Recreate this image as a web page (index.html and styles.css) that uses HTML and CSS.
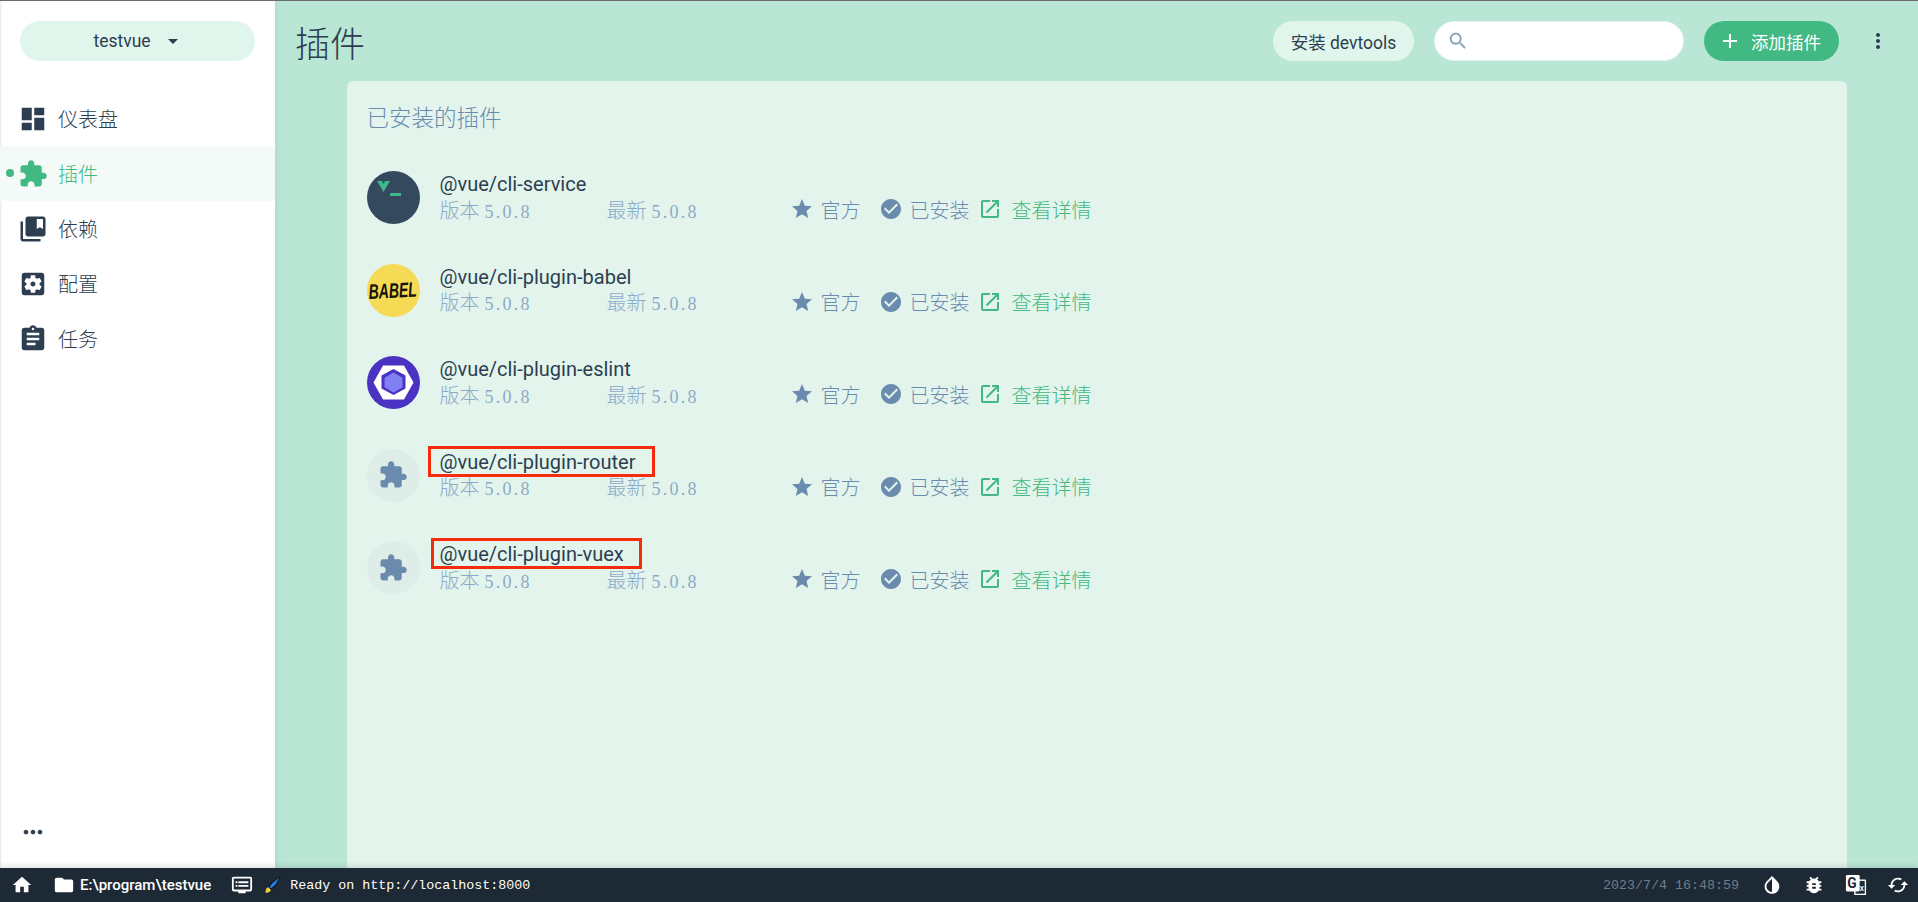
FILE: index.html
```html
<!DOCTYPE html>
<html lang="en">
<head>
  <meta charset="UTF-8">
  <title>vue project manager</title>
  <link rel="stylesheet" href="styles.css">
</head>
<body>
  <svg class="sprites" width="0" height="0">
    <symbol id="i-dashboard" viewBox="0 0 24 24"><path d="M3 13h8V3H3v10zm0 8h8v-6H3v6zm10 0h8V11h-8v10zm0-18v6h8V3h-8z"/></symbol>
    <symbol id="i-extension" viewBox="0 0 24 24"><path d="M20.5 11H19V7c0-1.1-.9-2-2-2h-4V3.5C13 2.12 11.88 1 10.5 1S8 2.12 8 3.5V5H4c-1.1 0-1.99.9-1.99 2v3.8H3.5c1.49 0 2.7 1.21 2.7 2.7s-1.21 2.7-2.7 2.7H2V20c0 1.1.9 2 2 2h3.8v-1.5c0-1.49 1.21-2.7 2.7-2.7 1.49 0 2.7 1.21 2.7 2.7V22H17c1.1 0 2-.9 2-2v-4h1.5c1.38 0 2.5-1.12 2.5-2.5S21.88 11 20.5 11z"/></symbol>
    <symbol id="i-collections" viewBox="0 0 24 24"><path d="M4 6H2v14c0 1.1.9 2 2 2h14v-2H4V6zm16-4H8c-1.1 0-2 .9-2 2v12c0 1.1.9 2 2 2h12c1.1 0 2-.9 2-2V4c0-1.1-.9-2-2-2zm0 10l-2.5-1.5L15 12V4h5v8z"/></symbol>
    <symbol id="i-settings" viewBox="0 0 24 24"><path d="M12 10c-1.1 0-2 .9-2 2s.9 2 2 2 2-.9 2-2-.9-2-2-2zm7-7H5c-1.11 0-2 .9-2 2v14c0 1.1.89 2 2 2h14c1.11 0 2-.9 2-2V5c0-1.1-.89-2-2-2zm-1.75 9c0 .23-.02.46-.05.68l1.48 1.16c.13.11.17.3.08.45l-1.4 2.42c-.09.15-.27.21-.43.15l-1.74-.7c-.36.28-.76.51-1.18.69l-.26 1.85c-.03.17-.18.3-.35.3h-2.8c-.17 0-.32-.13-.35-.29l-.26-1.85c-.43-.18-.82-.41-1.18-.69l-1.74.7c-.16.06-.34 0-.43-.15l-1.4-2.42c-.09-.15-.05-.34.08-.45l1.48-1.16c-.03-.23-.05-.46-.05-.69 0-.23.02-.46.05-.68l-1.48-1.16c-.13-.11-.17-.3-.08-.45l1.4-2.42c.09-.15.27-.21.43-.15l1.74.7c.36-.28.76-.51 1.18-.69l.26-1.85c.03-.17.18-.3.35-.3h2.8c.17 0 .32.13.35.29l.26 1.85c.43.18.82.41 1.18.69l1.74-.7c.16-.06.34 0 .43.15l1.4 2.42c.09.15.05.34-.08.45l-1.48 1.16c.03.23.05.46.05.69z"/></symbol>
    <symbol id="i-assignment" viewBox="0 0 24 24"><path d="M19 3h-4.18C14.4 1.84 13.3 1 12 1c-1.3 0-2.4.84-2.82 2H5c-1.1 0-2 .9-2 2v14c0 1.1.9 2 2 2h14c1.1 0 2-.9 2-2V5c0-1.1-.9-2-2-2zm-7 0c.55 0 1 .45 1 1s-.45 1-1 1-1-.45-1-1 .45-1 1-1zm2 14H7v-2h7v2zm3-4H7v-2h10v2zm0-4H7V7h10v2z"/></symbol>
    <symbol id="i-star" viewBox="0 0 24 24"><path d="M12 17.27L18.18 21l-1.64-7.03L22 9.24l-7.19-.61L12 2 9.19 8.63 2 9.24l5.46 4.73L5.82 21z"/></symbol>
    <symbol id="i-check" viewBox="0 0 24 24"><path d="M12 2C6.48 2 2 6.48 2 12s4.48 10 10 10 10-4.48 10-10S17.52 2 12 2zm-2 15l-5-5 1.41-1.41L10 14.17l7.59-7.59L19 8l-9 9z"/></symbol>
    <symbol id="i-open" viewBox="0 0 24 24"><path d="M19 19H5V5h7V3H5c-1.11 0-2 .9-2 2v14c0 1.1.89 2 2 2h14c1.1 0 2-.9 2-2v-7h-2v7zM14 3v2h3.59l-9.83 9.83 1.41 1.41L19 6.41V10h2V3h-7z"/></symbol>
  </svg>

  <div class="app">
    <div class="body-row">
      <aside class="sidebar">
        <div class="project-pill">
          <span>testvue</span>
          <i class="caret"></i>
        </div>
        <nav class="nav">
          <a class="nav-item"><svg class="nav-icon"><use href="#i-dashboard"/></svg>仪表盘</a>
          <a class="nav-item active"><svg class="nav-icon"><use href="#i-extension"/></svg>插件</a>
          <a class="nav-item"><svg class="nav-icon"><use href="#i-collections"/></svg>依赖</a>
          <a class="nav-item"><svg class="nav-icon"><use href="#i-settings"/></svg>配置</a>
          <a class="nav-item"><svg class="nav-icon"><use href="#i-assignment"/></svg>任务</a>
        </nav>
        <div class="more-dots">
          <svg width="28" height="28" viewBox="0 0 24 24"><path d="M6 10c-1.100 0-2 .9-2 2s.9 2 2 2 2-.9 2-2-.9-2-2-2zm12 0c-1.100 0-2 .9-2 2s.9 2 2 2 2-.9 2-2-.9-2-2-2zm-6 0c-1.100 0-2 .9-2 2s.9 2 2 2 2-.9 2-2-.9-2-2-2z"/></svg>
        </div>
      </aside>

      <main class="content">
        <header class="topbar">
          <h1 class="page-title">插件</h1>
          <div class="top-actions">
            <button class="btn btn-light">安装 devtools</button>
            <div class="search-box">
              <svg width="22" height="22" viewBox="0 0 24 24"><path d="M15.500 14h-.79l-.28-.27C15.410 12.590 16 11.110 16 9.500 16 5.910 13.090 3 9.500 3S3 5.910 3 9.500 5.910 16 9.500 16c1.610 0 3.090-.59 4.230-1.570l.27.28v.79l5 4.990L20.490 19l-4.990-5zm-6 0C7.010 14 5 11.990 5 9.500S7.010 5 9.500 5 14 7.010 14 9.500 11.990 14 9.500 14z"/></svg>
            </div>
            <button class="btn btn-primary">
              <svg width="24" height="24" viewBox="0 0 24 24"><path d="M19 13h-6v6h-2v-6H5v-2h6V5h2v6h6v2z"/></svg>
              添加插件
            </button>
            <svg class="kebab" width="24" height="24" viewBox="0 0 24 24"><path d="M12 8c1.100 0 2-.9 2-2s-.9-2-2-2-2 .9-2 2 .9 2 2 2zm0 2c-1.100 0-2 .9-2 2s.9 2 2 2 2-.9 2-2-.9-2-2-2zm0 6c-1.100 0-2 .9-2 2s.9 2 2 2 2-.9 2-2-.9-2-2-2z"/></svg>
          </div>
        </header>

        <section class="card">
          <h2 class="card-title">已安装的插件</h2>
          <div class="plugin-list">

            <div class="plugin">
              <div class="logo logo-service">
                <svg width="53" height="53" viewBox="0 0 53 53"><path d="M10 10h5l1.500 3 1.500-3h5l-6.500 11z" fill="#3eb88d"/><rect x="23" y="22" width="11" height="3" fill="#3eb88d"/></svg>
              </div>
              <div class="plugin-info">
                <div class="plugin-name">@vue/cli-service</div>
                <div class="plugin-meta">
                  <span class="ver">版本 <b>5.0.8</b></span>
                  <span class="ver latest">最新 <b>5.0.8</b></span>
                  <span class="tag tag-official"><svg><use href="#i-star"/></svg>官方</span>
                  <span class="tag tag-installed"><svg><use href="#i-check"/></svg>已安装</span>
                  <a class="tag tag-link"><svg><use href="#i-open"/></svg>查看详情</a>
                </div>
              </div>
            </div>

            <div class="plugin">
              <div class="logo logo-babel">
                <svg width="53" height="53" viewBox="0 0 53 53"><text transform="translate(2 35) rotate(-3) scale(1 1.500)" class="babel-text">BABEL</text></svg>
              </div>
              <div class="plugin-info">
                <div class="plugin-name">@vue/cli-plugin-babel</div>
                <div class="plugin-meta">
                  <span class="ver">版本 <b>5.0.8</b></span>
                  <span class="ver latest">最新 <b>5.0.8</b></span>
                  <span class="tag tag-official"><svg><use href="#i-star"/></svg>官方</span>
                  <span class="tag tag-installed"><svg><use href="#i-check"/></svg>已安装</span>
                  <a class="tag tag-link"><svg><use href="#i-open"/></svg>查看详情</a>
                </div>
              </div>
            </div>

            <div class="plugin">
              <div class="logo logo-eslint">
                <svg width="53" height="53" viewBox="0 0 53 53"><path d="M16 9.500h21l9.500 17-9.500 17H16l-9.500-17z" fill="#fff"/><path d="M26.500 13l12 6.500v13l-12 6.500-12-6.500v-13z" fill="#4b32c3"/><path d="M26.500 16.500l9 5.200v9.600l-9 5.200-9-5.200v-9.600z" fill="#8080f2"/></svg>
              </div>
              <div class="plugin-info">
                <div class="plugin-name">@vue/cli-plugin-eslint</div>
                <div class="plugin-meta">
                  <span class="ver">版本 <b>5.0.8</b></span>
                  <span class="ver latest">最新 <b>5.0.8</b></span>
                  <span class="tag tag-official"><svg><use href="#i-star"/></svg>官方</span>
                  <span class="tag tag-installed"><svg><use href="#i-check"/></svg>已安装</span>
                  <a class="tag tag-link"><svg><use href="#i-open"/></svg>查看详情</a>
                </div>
              </div>
            </div>

            <div class="plugin">
              <div class="logo logo-default"><svg><use href="#i-extension"/></svg></div>
              <div class="plugin-info">
                <div class="plugin-name">
                  @vue/cli-plugin-router
                  <span class="mark mark-router"></span>
                </div>
                <div class="plugin-meta">
                  <span class="ver">版本 <b>5.0.8</b></span>
                  <span class="ver latest">最新 <b>5.0.8</b></span>
                  <span class="tag tag-official"><svg><use href="#i-star"/></svg>官方</span>
                  <span class="tag tag-installed"><svg><use href="#i-check"/></svg>已安装</span>
                  <a class="tag tag-link"><svg><use href="#i-open"/></svg>查看详情</a>
                </div>
              </div>
            </div>

            <div class="plugin">
              <div class="logo logo-default"><svg><use href="#i-extension"/></svg></div>
              <div class="plugin-info">
                <div class="plugin-name">
                  @vue/cli-plugin-vuex
                  <span class="mark mark-vuex"></span>
                </div>
                <div class="plugin-meta">
                  <span class="ver">版本 <b>5.0.8</b></span>
                  <span class="ver latest">最新 <b>5.0.8</b></span>
                  <span class="tag tag-official"><svg><use href="#i-star"/></svg>官方</span>
                  <span class="tag tag-installed"><svg><use href="#i-check"/></svg>已安装</span>
                  <a class="tag tag-link"><svg><use href="#i-open"/></svg>查看详情</a>
                </div>
              </div>
            </div>

          </div>
        </section>
      </main>
    </div>

    <footer class="statusbar">
      <svg class="bar-icon home" viewBox="0 0 24 24"><path d="M10 20v-6h4v6h5v-8h3L12 3 2 12h3v8z"/></svg>
      <svg class="bar-icon folder" viewBox="0 0 24 24"><path d="M10 4H4c-1.100 0-1.990.9-1.990 2L2 18c0 1.100.9 2 2 2h16c1.100 0 2-.9 2-2V8c0-1.100-.9-2-2-2h-8l-2-2z"/></svg>
      <span class="path">E:\program\testvue</span>
      <svg class="bar-icon logs" viewBox="0 0 24 24"><path d="M21 3H3c-1.100 0-2 .9-2 2v12c0 1.100.9 2 2 2h5v2h8v-2h5c1.100 0 1.990-.9 1.990-2L23 5c0-1.100-.9-2-2-2zm0 14H3V5h18v12zm-2-9H8v2h11V8zm0 4H8v2h11v-2zM7 8H5v2h2V8zm0 4H5v2h2v-2z"/></svg>
      <svg class="brush" width="16" height="18" viewBox="0 0 16 18"><path d="M15.500 .5L7.500 5.500 3 11l3 3 5-4.500z" fill="#0d1420"/><path d="M14 2L8 6.500 4.500 11l1.500 1.500 4.500-4z" fill="#2a7de1"/><path d="M3 11l-2 2-.5 4 4-1 1.500-2z" fill="#f2d13c"/></svg>
      <span class="log-line">Ready on http://localhost:8000</span>
      <span class="clock">2023/7/4 16:48:59</span>
      <svg class="bar-icon right" viewBox="0 0 24 24"><path d="M17.660 7.930L12 2.270 6.340 7.930c-3.120 3.120-3.120 8.190 0 11.310C7.900 20.800 9.950 21.580 12 21.580c2.050 0 4.100-.78 5.660-2.340 3.120-3.120 3.120-8.190 0-11.310zM12 19.590c-1.600 0-3.110-.62-4.240-1.760C6.620 16.690 6 15.190 6 13.590s.62-3.110 1.760-4.240L12 5.100v14.490z"/></svg>
      <svg class="bar-icon right" viewBox="0 0 24 24"><path d="M20 8h-2.810c-.45-.78-1.070-1.450-1.820-1.960L17 4.410 15.590 3l-2.170 2.170C12.960 5.060 12.490 5 12 5c-.49 0-.96.06-1.410.17L8.410 3 7 4.410l1.620 1.630C7.880 6.550 7.260 7.220 6.810 8H4v2h2.090c-.05.33-.09.66-.09 1v1H4v2h2v1c0 .34.04.67.09 1H4v2h2.810c1.040 1.790 2.970 3 5.190 3s4.150-1.210 5.190-3H20v-2h-2.090c.05-.33.09-.66.09-1v-1h2v-2h-2v-1c0-.34-.04-.67-.09-1H20V8zm-6 8h-4v-2h4v2zm0-4h-4v-2h4v2z"/></svg>
      <svg class="bar-icon right" viewBox="0 0 24 24"><rect x="10" y="6" width="13" height="17" rx="1"/><rect x="11.500" y="7.500" width="10" height="14" fill="#1d2935"/><rect x="1" y="1" width="15" height="18" rx="1.500"/><text x="2.500" y="15" class="tr-g">G</text><text x="16" y="18" class="tr-x">X</text></svg>
      <svg class="bar-icon right" viewBox="0 0 24 24"><path d="M19 8l-4 4h3c0 3.310-2.690 6-6 6-1.010 0-1.970-.25-2.800-.7l-1.460 1.460C8.970 19.540 10.430 20 12 20c4.420 0 8-3.580 8-8h3l-4-4zM6 12c0-3.310 2.690-6 6-6 1.010 0 1.970.25 2.800.7l1.460-1.460C15.030 4.460 13.570 4 12 4c-4.420 0-8 3.580-8 8H1l4 4 4-4H6z"/></svg>
    </footer>
  </div>
</body>
</html>
```

FILE: styles.css
```css
* {
  box-sizing: border-box;
}
html, body {
  height: 100%;
}
body {
  margin: 0;
  overflow: hidden;
  font-family: Roboto, "Noto Sans CJK SC", sans-serif;
  color: #2c3e50;
  border-top: 1px solid #6b6b6b;
}
.sprites {
  position: absolute;
}
.app {
  display: flex;
  flex-direction: column;
  height: 100%;
}
.body-row {
  flex: 1;
  display: flex;
  min-height: 0;
}

/* sidebar */
.sidebar {
  width: 275px;
  display: flex;
  flex-direction: column;
  background: #fff;
  box-shadow: inset 2px 0 2px -1px rgba(0,0,0,.1), 2px 0 6px rgba(0,0,0,.05);
  z-index: 1;
}
.project-pill {
  margin: 20px 20px 30px;
  height: 40px;
  padding-right: 4px;
  border-radius: 20px;
  background: #e0f6ec;
  display: flex;
  align-items: center;
  justify-content: center;
  gap: 17px;
  font-size: 17.500px;
}
.caret {
  width: 0;
  height: 0;
  border-left: 5px solid transparent;
  border-right: 5px solid transparent;
  border-top: 5px solid #2c3e50;
}
.nav-item {
  position: relative;
  display: flex;
  align-items: center;
  height: 55px;
  padding-left: 20px;
  font-size: 20px;
  font-weight: 300;
  fill: #2c3e50;
}
.nav-icon {
  width: 30px;
  height: 30px;
  margin-left: -2px;
  margin-right: 10px;
}
.nav-item.active {
  background: #f3faf7;
  color: #42b983;
  fill: #42b983;
}
.nav-item.active::before {
  content: "";
  position: absolute;
  left: 6px;
  top: 23px;
  width: 8px;
  height: 8px;
  border-radius: 50%;
  background: #42b983;
}
.more-dots {
  margin-top: auto;
  padding: 0 0 21px 19px;
  height: 50px;
  fill: #2c3e50;
}

/* main */
.content {
  flex: 1;
  min-width: 0;
  display: flex;
  flex-direction: column;
  background: #bae6d5;
}
.topbar {
  height: 80px;
  display: flex;
  align-items: center;
  justify-content: space-between;
  padding: 0 20px;
}
.page-title {
  margin: 0;
  font-size: 35px;
  font-weight: 300;
}
.top-actions {
  display: flex;
  align-items: center;
}
.btn {
  height: 40px;
  border: none;
  border-radius: 20px;
  font-family: inherit;
  font-size: 17.500px;
  display: flex;
  align-items: center;
  white-space: nowrap;
}
.btn-light {
  width: 141px;
  padding: 0;
  justify-content: center;
  background: #e0f6ec;
  color: #2c3e50;
}
.search-box {
  width: 250px;
  height: 40px;
  margin: 0 20px;
  padding-left: 12px;
  display: flex;
  align-items: center;
  border-radius: 20px;
  background: #fff;
  border: 1px solid #e0f6ec;
  fill: #86a3b8;
}
.btn-primary {
  width: 135px;
  padding: 0 0 0 14px;
  gap: 9px;
  background: #42b983;
  color: #fff;
  fill: #fff;
}
.kebab {
  margin-left: 27px;
  margin-right: 8px;
  fill: #2c3e50;
}
.card {
  flex: 1;
  width: 1500px;
  margin: 0 auto;
  padding: 0 20px;
  background: #e3f4ed;
  border-radius: 6px 6px 0 0;
}
.card-title {
  margin: 0;
  padding-top: 21px;
  height: 90px;
  font-size: 22.500px;
  line-height: 33px;
  font-weight: 300;
  color: #6a8bad;
}
.plugin {
  display: flex;
  height: 92.500px;
}
.logo {
  width: 53px;
  height: 53px;
  border-radius: 50%;
  flex: none;
  display: flex;
  align-items: center;
  justify-content: center;
}
.logo-service {
  background: #34495e;
}
.logo-babel {
  background: #f5da55;
}
.babel-text {
  font: italic 700 14px "Liberation Sans", sans-serif;
  fill: #15130a;
}
.logo-eslint {
  background: #4b32c3;
}
.logo-default {
  background: #deede8;
  fill: #6a8bad;
}
.logo-default svg {
  width: 30px;
  height: 30px;
}
.plugin-info {
  margin-left: 20px;
}
.plugin-name {
  position: relative;
  height: 25px;
  font-size: 20px;
  line-height: 27px;
}
.plugin-meta {
  display: flex;
  align-items: center;
  height: 26px;
  font-size: 20px;
  font-weight: 300;
}
.ver {
  width: 167px;
  color: #8daac6;
}
.ver b {
  font: 400 18px "Liberation Serif", serif;
  letter-spacing: 2.250px;
}
.latest {
  width: 183px;
}
.tag {
  display: flex;
  align-items: center;
  color: #6a8bad;
  fill: #6a8bad;
}
.tag svg {
  width: 24px;
  height: 24px;
  margin-right: 7px;
}
.tag-official {
  width: 89px;
}
.tag-installed {
  width: 99px;
}
.tag-link {
  color: #42b983;
  fill: #42b983;
}
.tag-link svg {
  margin-right: 10px;
}

/* red annotation boxes on top of the screenshot */
.mark {
  position: absolute;
  border: 3px solid #f52b0c;
  height: 31px;
}
.mark-router {
  left: -12px;
  top: -3px;
  width: 227px;
}
.mark-vuex {
  left: -9px;
  top: -3px;
  width: 211px;
}

/* status bar */
.statusbar {
  position: relative;
  flex: none;
  height: 34px;
  display: flex;
  align-items: center;
  background: #1d2935;
  color: #fff;
  fill: #fff;
  padding-left: 11px;
  box-shadow: 0 -2px 6px rgba(0,0,0,.12);
  z-index: 2;
}
.bar-icon {
  width: 22px;
  height: 22px;
  flex: none;
}
.folder {
  margin-left: 20px;
}
.path {
  margin-left: 5px;
  font-size: 15px;
  font-weight: 500;
}
.logs {
  margin-left: 20px;
}
.brush {
  margin-left: 12px;
}
.log-line {
  margin-left: 9px;
  font: 13.330px "Liberation Mono", monospace;
}
.clock {
  margin-left: auto;
  margin-right: 22px;
  font: 13.330px "Liberation Mono", monospace;
  color: #6f7c89;
}
.right {
  margin-right: 20px;
}
.right:last-child {
  margin-right: 9px;
}
.tr-g {
  font: 700 15px Roboto, sans-serif;
  fill: #1d2935;
}
.tr-x {
  font: 700 7px Roboto, sans-serif;
  fill: #fff;
}
```
